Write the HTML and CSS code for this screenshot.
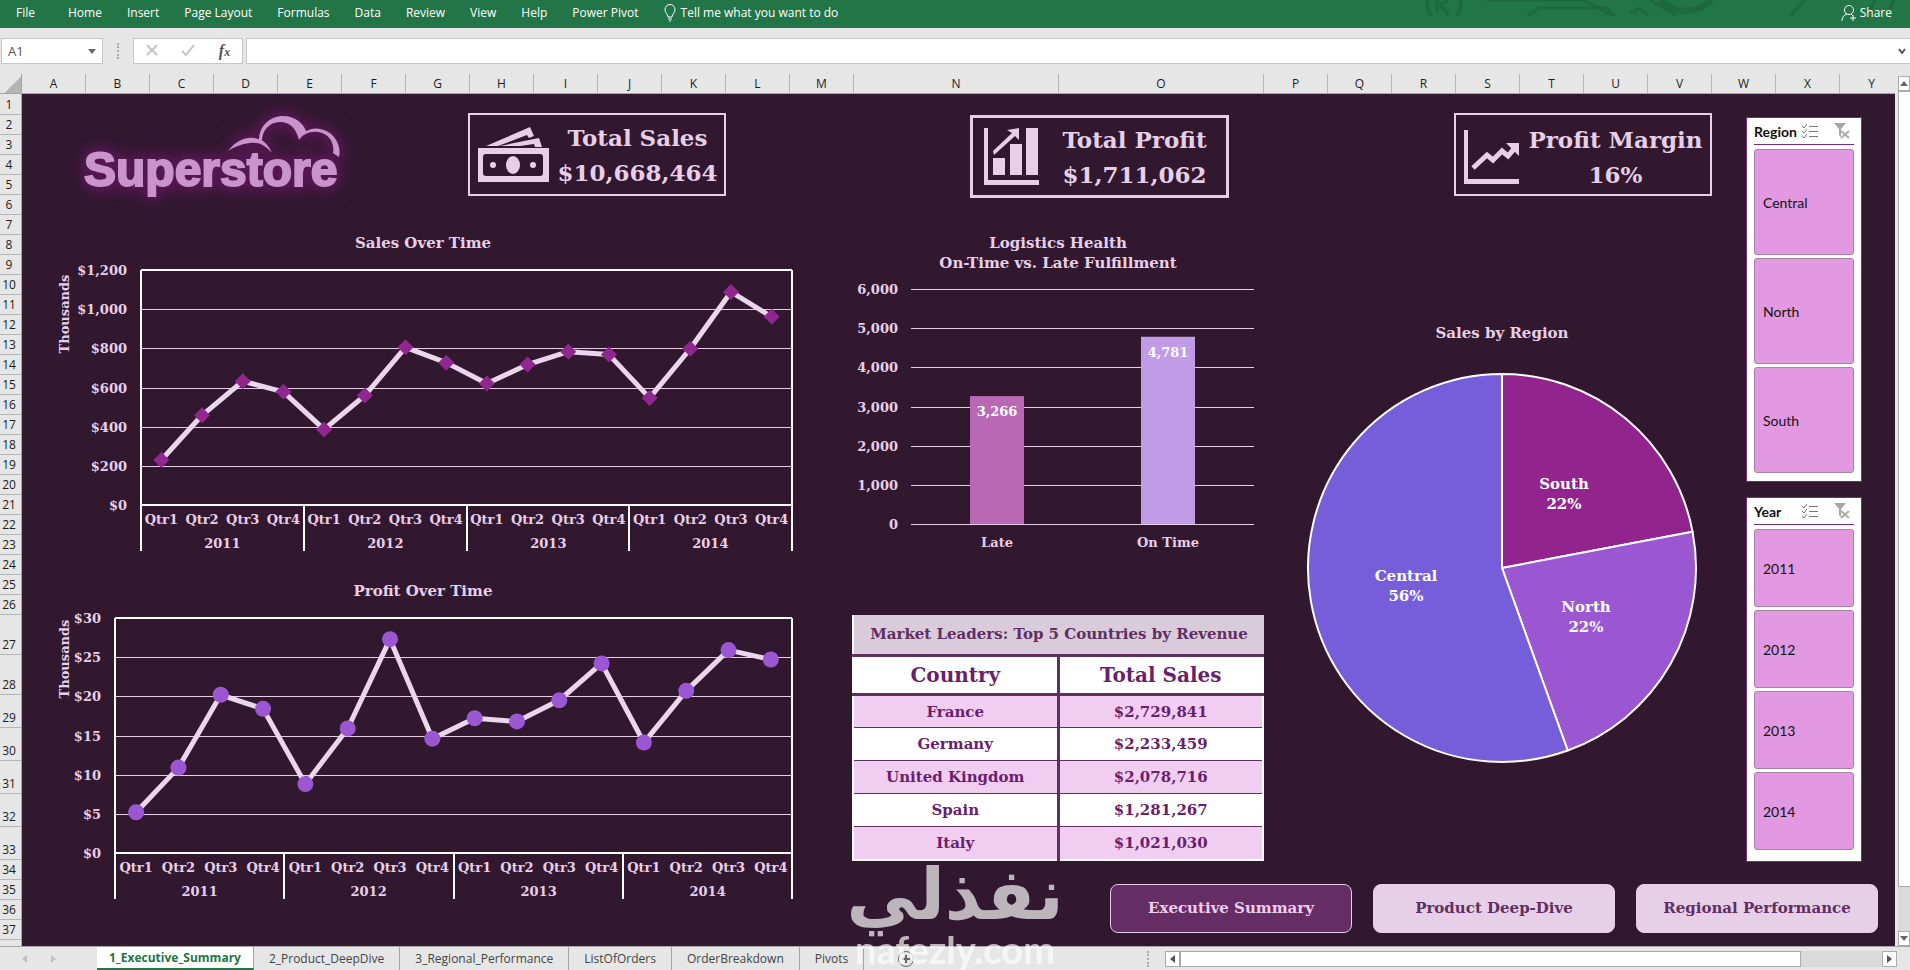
FILE: index.html
```html
<!DOCTYPE html>
<html lang="en">
<head>
    <meta charset="UTF-8">
    <meta name="viewport" content="width=device-width, initial-scale=1.0">
    <title>Superstore - Executive Summary</title>
    <link rel="stylesheet" href="styles.css">
</head>
<body>
    <header class="ribbon">
        <svg class="ribbon-art" width="500" height="16" viewBox="0 0 500 16" fill="none" stroke="#1d683c" stroke-width="3">
            <path d="M18 0q-3 8 3 16M50 0q3 8-3 16M27 0v12M38 0l-8 5 9 10"/>
            <path d="M77 0h96l30 16M117 16l13-8h67l8 8M220 13l10-5 9 8M240 0l27 16"/>
            <path d="M250 0q26 22 52 0" stroke-width="6"/>
            <path d="M395 0l-15 16M465 0l-5 10M484 0l-6 12"/>
        </svg>
        <nav class="menu">
            <button class="menu-file">File</button>
            <button>Home</button>
            <button>Insert</button>
            <button>Page Layout</button>
            <button>Formulas</button>
            <button>Data</button>
            <button>Review</button>
            <button>View</button>
            <button>Help</button>
            <button>Power Pivot</button>
            <button class="tell-me">
                <svg width="12" height="18" viewBox="0 0 12 18" fill="none" stroke="#fff"><path d="M4 13c0-3-3-4-3-7.500a5 5 0 0 1 10 0C11 9 8 10 8 13zM4 15h4M5 17h2"/></svg>
                Tell me what you want to do
            </button>
        </nav>
        <button class="share">
            <svg width="16" height="18" viewBox="0 0 16 18" fill="none" stroke="#fff"><circle cx="8" cy="6" r="4.500"/><path d="M1 17c0-4 2-6 5-7M10 10l2 2M12 11v6M9 14h6"/></svg>
            Share
        </button>
    </header>

    <div class="formula-bar">
        <div class="name-box">
            <input type="text" value="A1" aria-label="Name box">
            <span class="arrow-down"></span>
        </div>
        <span class="grip"></span>
        <div class="fx-box">
            <button aria-label="Cancel"><svg width="12" height="12" viewBox="0 0 12 12" stroke="#c3c3c3" stroke-width="2"><path d="M1 1l10 10M11 1L1 11"/></svg></button>
            <button aria-label="Enter"><svg width="14" height="12" viewBox="0 0 14 12" fill="none" stroke="#c3c3c3" stroke-width="2"><path d="M1 7l4 4 8-10"/></svg></button>
            <button class="fx" aria-label="Insert function">f<sub>x</sub></button>
        </div>
        <input class="formula" type="text" aria-label="Formula">
        <svg class="expand" width="8" height="6" viewBox="0 0 8 6" fill="none" stroke="#555" stroke-width="2"><path d="M1 1l3 4 3-4"/></svg>
    </div>

    <div class="grid-area">
        <div class="corner"></div>
        <div class="col-heads"><div class="col-row" id="colHeads"></div></div>
        <div class="row-heads" id="rowHeads"></div>

        <main class="dashboard">
            <section class="left">
                <div class="top-row">
                    <svg class="logo" width="320" height="130" viewBox="0 4 320 130" role="img" aria-label="Superstore">
                        <text x="24" y="96">Superstore</text>
                        <path d="M168 61C176 51 185 47 194 48C204 49 209 56 212 63C205 55 199 52 190 53C181 54 174 57 168 61Z"/>
                        <path d="M199 50C199 36 210 26 223 26C235 26 243 33 246 41C252 38 257 38 260 39C273 41 282 54 279 67L273 63C275 54 269 43 258 42C250 41 243 44 239 50C236 38 230 32 220 32C209 32 202 41 202 51Z"/>
                    </svg>
                    <div class="kpi">
                        <svg width="71" height="56" viewBox="0 0 71 56">
                            <path d="M8 19L52 0l4 9-5 2-2-3L20 19zM22 19l39-8 3 9h-7l-1-3-14 2z"/>
                            <path fill-rule="evenodd" d="M0 21h71v34H0zM8 27q-3 0-3 3v16q0 3 3 3h54q3 0 3-3V30q0-3-3-3z"/>
                            <ellipse cx="35" cy="38" rx="7" ry="9"/><circle cx="15" cy="38" r="3"/><circle cx="55" cy="38" r="3"/>
                        </svg>
                        <div class="kpi-text"><h2>Total Sales</h2><p>$10,668,464</p></div>
                    </div>
                </div>
                <svg class="chart" id="salesChart" viewBox="0 0 798 351"></svg>
                <svg class="chart" id="profitChart" viewBox="0 0 798 332"></svg>
            </section>

            <div class="right">
                <div class="panels">
                    <section class="center">
                        <div class="top-row">
                            <div class="kpi kpi-thick">
                                <svg width="55" height="57" viewBox="0 0 55 57">
                                    <path d="M0 0h4v52h51v5H0zM9 30h12v17H9zM26 16h12v31H26zM42 0h12v47H42z"/>
                                    <path d="M9 23L28 5l-5-3 12-2v12l-4-4L10 27z"/>
                                </svg>
                                <div class="kpi-text"><h2>Total Profit</h2><p>$1,711,062</p></div>
                            </div>
                        </div>
                        <svg class="chart" id="barChart" viewBox="0 0 470 374"></svg>
                        <table class="leaders">
                            <caption>Market Leaders: Top 5 Countries by Revenue</caption>
                            <thead>
                                <tr><th scope="col">Country</th><th scope="col">Total Sales</th></tr>
                            </thead>
                            <tbody>
                                <tr><td>France</td><td>$2,729,841</td></tr>
                                <tr><td>Germany</td><td>$2,233,459</td></tr>
                                <tr><td>United Kingdom</td><td>$2,078,716</td></tr>
                                <tr><td>Spain</td><td>$1,281,267</td></tr>
                                <tr><td>Italy</td><td>$1,021,030</td></tr>
                            </tbody>
                        </table>
                    </section>

                    <section class="regions">
                        <div class="top-row">
                            <div class="kpi kpi-margin">
                                <svg width="55" height="54" viewBox="0 0 55 54">
                                    <path d="M0 0h4v49h51v5H0z"/>
                                    <path d="M9 38l14-13 6 5 9-9 6 5 6-7" fill="none" stroke="#e8cfe8" stroke-width="5"/>
                                    <path d="M42 13h13v13z"/>
                                </svg>
                                <div class="kpi-text"><h2>Profit Margin</h2><p>16%</p></div>
                            </div>
                        </div>
                        <svg class="chart" id="pieChart" viewBox="0 0 440 560"></svg>
                    </section>

                    <aside class="slicers">
                        <div class="slicer slicer-region">
                            <div class="slicer-head">
                                <h3>Region</h3>
                                <button aria-label="Multi-select"><svg width="16" height="15" viewBox="0 0 16 15" fill="none" stroke="#777"><path d="M7 2.500h9M7 7.500h9M7 12.500h9M0 2l2 2 3-4M0 7l2 2 3-4M0 12l2 2 3-4"/></svg></button>
                                <button aria-label="Clear filter"><svg width="16" height="16" viewBox="0 0 16 16"><path fill="#a6a6a6" d="M0 0h12L7 6v8l-2-2V6z"/><path stroke="#b0aca6" stroke-width="2" d="M7 8l8 7M15 8l-8 7"/></svg></button>
                            </div>
                            <button class="item">Central</button>
                            <button class="item">North</button>
                            <button class="item">South</button>
                        </div>
                        <div class="slicer slicer-year">
                            <div class="slicer-head">
                                <h3>Year</h3>
                                <button aria-label="Multi-select"><svg width="16" height="15" viewBox="0 0 16 15" fill="none" stroke="#777"><path d="M7 2.500h9M7 7.500h9M7 12.500h9M0 2l2 2 3-4M0 7l2 2 3-4M0 12l2 2 3-4"/></svg></button>
                                <button aria-label="Clear filter"><svg width="16" height="16" viewBox="0 0 16 16"><path fill="#a6a6a6" d="M0 0h12L7 6v8l-2-2V6z"/><path stroke="#b0aca6" stroke-width="2" d="M7 8l8 7M15 8l-8 7"/></svg></button>
                            </div>
                            <button class="item">2011</button>
                            <button class="item">2012</button>
                            <button class="item">2013</button>
                            <button class="item">2014</button>
                        </div>
                    </aside>
                </div>

                <nav class="pages">
                    <a class="page current" href="#summary">Executive Summary</a>
                    <a class="page" href="#products">Product Deep-Dive</a>
                    <a class="page" href="#regional">Regional Performance</a>
                </nav>
            </div>
        </main>

        <div class="vscroll">
            <button aria-label="Scroll up"><span class="arrow-up"></span></button>
            <div class="thumb"></div>
            <button aria-label="Scroll down"><span class="arrow-down"></span></button>
        </div>
    </div>

    <footer class="tabs">
        <span class="arrow-left faint"></span>
        <span class="arrow-right faint"></span>
        <div class="tab-list">
            <button class="tab active">1_Executive_Summary</button>
            <button class="tab">2_Product_DeepDive</button>
            <button class="tab">3_Regional_Performance</button>
            <button class="tab">ListOfOrders</button>
            <button class="tab">OrderBreakdown</button>
            <button class="tab">Pivots</button>
        </div>
        <button class="add" aria-label="New sheet"><svg width="16" height="16" viewBox="0 0 16 16" fill="none" stroke="#666"><circle cx="8" cy="8" r="7.500"/><path stroke-width="2" d="M8 4v8M4 8h8"/></svg></button>
        <span class="grip"></span>
        <div class="hscroll">
            <button aria-label="Scroll left"><span class="arrow-left"></span></button>
            <div class="thumb"></div>
            <div class="track"></div>
            <button aria-label="Scroll right"><span class="arrow-right"></span></button>
        </div>
    </footer>

    <div class="watermark">
        <span class="wm-arabic" lang="ar" dir="rtl">نفذلي</span>
        <span class="wm-latin">nafezly.com</span>
    </div>

    <script>
        // column and row headings
        document.getElementById('colHeads').innerHTML =
            'ABCDEFGHIJKLMNOPQRSTUVWXY'.split('').map(c => `<div>${c}</div>`).join('');

        let rows = '';
        for (let i = 1; i <= 38; i++) {
            let size = '';
            if (i === 27 || i === 28) size = 'tall';
            else if (i > 28 && i < 34) size = 'mid';
            rows += `<div class="${size}">${i < 38 ? i : ''}</div>`;
        }
        document.getElementById('rowHeads').innerHTML = rows;

        function line(x1, y1, x2, y2, cls) {
            return `<line x1="${x1}" y1="${y1}" x2="${x2}" y2="${y2}" class="${cls}"/>`;
        }

        function text(x, y, str, cls) {
            return `<text x="${x}" y="${y}" class="${cls}">${str}</text>`;
        }

        // quarterly line chart with the years under the quarters
        function lineChart(id, o) {
            const right = 770;
            const height = 235;
            const bottom = o.top + height;
            const step = (right - o.left) / 16;
            let out = text(401, o.titleY, o.title, 'title');
            out += `<text transform="translate(47 ${o.unitY}) rotate(-90)" class="label">Thousands</text>`;

            for (let v = 0; v <= o.max; v += o.tick) {
                const y = Math.round(bottom - v / o.max * height);
                if (v > 0 && v < o.max) out += line(o.left, y, right, y, 'gridline');
                out += text(o.left - 14, y + 5, '$' + v.toLocaleString('en-US'), 'label end');
            }
            out += line(o.left, o.top, right, o.top, 'frame');
            out += line(o.left, bottom, right, bottom, 'frame');

            for (let i = 0; i <= 4; i++) {
                const x = Math.round(o.left + i * step * 4);
                const from = i === 0 || i === 4 ? o.top : bottom;
                out += line(x, from, x, bottom + 46, 'frame');
                if (i < 4) out += text(x + step * 2, bottom + 43, 2011 + i, 'label');
            }

            const pts = o.values.map((v, i) => [o.left + step * (i + 0.5), bottom - v / o.max * height]);
            out += `<polyline points="${pts.join(' ')}" class="series"/>`;
            pts.forEach(([x, y], i) => {
                out += text(x, bottom + 19, 'Qtr' + (i % 4 + 1), 'label');
                out += o.round
                    ? `<circle cx="${x}" cy="${y}" r="8" class="dot"/>`
                    : `<path d="M${x} ${y - 8}l8 8-8 8-8-8z" class="diamond"/>`;
            });
            document.getElementById(id).innerHTML = out;
        }

        lineChart('salesChart', {
            title: 'Sales Over Time', titleY: 22, unitY: 88, left: 119, top: 44, max: 1200, tick: 200,
            values: [230, 458, 632, 578, 386, 559, 805, 727, 620, 717, 783, 768, 547, 798, 1088, 961]
        });
        lineChart('profitChart', {
            title: 'Profit Over Time', titleY: 19, unitY: 82, left: 93, top: 41, max: 30, tick: 5, round: true,
            values: [5.2, 10.9, 20.2, 18.4, 8.8, 15.9, 27.3, 14.6, 17.2, 16.8, 19.5, 24.2, 14.1, 20.7, 25.9, 24.7]
        });

        // logistics bars
        let bars = text(238, 22, 'Logistics Health', 'title') + text(238, 42, 'On-Time vs. Late Fulfillment', 'title');
        for (let v = 0; v <= 6000; v += 1000) {
            const y = Math.round(298 - v / 6000 * 235);
            bars += line(91, y, 434, y, 'gridline') + text(78, y + 5, v.toLocaleString('en-US'), 'label end');
        }
        [['Late', 3266, 177, 'late'], ['On Time', 4781, 348, 'ontime']].forEach(([name, v, x, cls]) => {
            const h = v / 6000 * 235;
            bars += `<rect x="${x - 27}" y="${298 - h}" width="54" height="${h}" class="${cls}"/>`;
            bars += text(x, 298 - h + 20, v.toLocaleString('en-US'), 'label white');
            bars += text(x, 321, name, 'label');
        });
        document.getElementById('barChart').innerHTML = bars;

        // sales by region, clockwise from the top
        let pie = text(212, 112, 'Sales by Region', 'title');
        let start = 0;
        [['South', 22, 22, 274, 263], ['North', 22, 22.5, 296, 386], ['Central', 56, 55.5, 116, 355]].forEach(([name, pct, share, x, y]) => {
            const end = start + share / 100 * 2 * Math.PI;
            const p = a => (212 + 194 * Math.sin(a)) + ' ' + (342 - 194 * Math.cos(a));
            pie += `<path d="M212 342L${p(start)}A194 194 0 ${share > 50 ? 1 : 0} 1 ${p(end)}Z" class="slice ${name.toLowerCase()}"/>`;
            pie += text(x, y, name, 'title white') + text(x, y + 20, pct + '%', 'title white');
            start = end;
        });
        document.getElementById('pieChart').innerHTML = pie;
    </script>
</body>
</html>
```
FILE: styles.css
```css
* {
    box-sizing: border-box;
}
body {
    margin: 0;
    height: 100vh;
    display: flex;
    flex-direction: column;
    position: relative;
    overflow: hidden;
    background: #e6e6e6;
    font-family: "Open Sans", "Noto Sans", sans-serif;
    font-size: 12px;
    color: #1c1c1c;
}
button, input {
    font: inherit;
    color: inherit;
    border: none;
    background: none;
    padding: 0;
    margin: 0;
}
h2, h3, p {
    margin: 0;
}

/* ribbon */
.ribbon {
    height: 28px;
    flex: none;
    display: flex;
    justify-content: space-between;
    align-items: flex-start;
    padding: 0 18px 0 16px;
    background: #217546;
    color: #fff;
    position: relative;
}
.ribbon-art {
    position: absolute;
    right: 0;
    top: 0;
}
.menu {
    display: flex;
    gap: 25px;
    height: 25px;
}
.menu-file {
    margin-right: 8px;
}
.tell-me, .share {
    display: flex;
    align-items: center;
    gap: 5px;
}
.share {
    height: 25px;
    gap: 3px;
    position: relative;
}

/* formula bar */
.formula-bar {
    height: 46px;
    flex: none;
    display: flex;
    align-items: center;
    padding: 8px 0 8px 1px;
    position: relative;
}
.name-box, .fx-box, .formula {
    height: 26px;
    background: #fff;
    border: 1px solid #c6c6c6;
}
.name-box {
    width: 102px;
    display: flex;
    align-items: center;
    padding: 0 6px;
    color: #555;
    font-size: 13px;
}
.name-box input {
    flex: 1;
    min-width: 0;
}
.grip {
    width: 2px;
    height: 16px;
    margin: 0 14px;
    border-left: 2px dotted #aaa;
}
.fx-box {
    width: 110px;
    display: flex;
    align-items: center;
    justify-content: space-around;
}
.fx {
    font: italic bold 16px/20px "Liberation Serif", serif;
    color: #555;
}
.fx sub {
    font-size: 12px;
    vertical-align: baseline;
}
.formula {
    flex: 1;
    margin-left: 3px;
    border-right: none;
}
.expand {
    position: absolute;
    right: 4px;
}
.arrow-down, .arrow-up, .arrow-left, .arrow-right {
    display: block;
    width: 0;
    height: 0;
    border: 4px solid transparent;
}
.arrow-down {
    border-top: 5px solid #666;
    border-bottom: none;
}
.arrow-up {
    border-bottom: 5px solid #666;
    border-top: none;
}
.arrow-left {
    border-right: 5px solid #555;
    border-left: none;
}
.arrow-right {
    border-left: 5px solid #555;
    border-right: none;
}
.faint {
    opacity: 0.25;
}

/* sheet */
.grid-area {
    flex: 1;
    min-height: 0;
    display: grid;
    grid-template-columns: 22px minmax(0, 1fr) 15px;
    grid-template-rows: 20px minmax(0, 1fr);
}
.corner {
    border-right: 1px solid #a5a5a5;
    border-bottom: 1px solid #a5a5a5;
    background: linear-gradient(135deg, transparent 60%, #b5b5b5 60%);
}
.col-heads {
    overflow: hidden;
    border-bottom: 1px solid #a5a5a5;
}
/* the last column runs on under the scrollbar */
.col-row {
    width: calc(100% + 9px);
    display: grid;
    grid-template-columns: repeat(13, 64fr) 205fr 205fr repeat(10, 64fr);
}
.col-row div {
    border-right: 1px solid #b5b5b5;
    text-align: center;
    line-height: 19px;
}
.row-heads {
    grid-column: 1;
    overflow: hidden;
    border-right: 1px solid #a5a5a5;
}
.row-heads div {
    height: 20px;
    display: flex;
    align-items: flex-end;
    justify-content: center;
    padding-right: 3px;
    line-height: 18px;
    border-bottom: 1px solid #b5b5b5;
}
.row-heads div:first-child {
    height: 21px;
}
.row-heads .tall {
    height: 40px;
}
.row-heads .mid {
    height: 33px;
}
.dashboard {
    background: #31182f;
    display: flex;
    overflow: hidden;
    font-family: "DejaVu Serif", serif;
    font-weight: bold;
    color: #e8cfe8;
}
.left {
    flex: 798;
    min-width: 0;
}
.right {
    flex: 1075;
    min-width: 0;
}
.panels {
    display: grid;
    grid-template-columns: minmax(0, 470fr) minmax(0, 440fr) 165px;
}
.top-row {
    height: 132px;
    display: flex;
    align-items: flex-start;
    justify-content: space-between;
    padding-top: 19px;
}
.left .top-row {
    padding: 0 94px 0 38px;
}
.left .kpi {
    margin-top: 19px;
}
.center .top-row {
    justify-content: flex-end;
    padding: 21px 61px 0 0;
}
.regions .top-row {
    justify-content: flex-end;
    padding-right: 18px;
}
.logo {
    filter: drop-shadow(0 0 3px #561852) drop-shadow(0 0 6px #561852) drop-shadow(0 0 8px #561852);
    fill: #c994cb;
}
.logo text {
    font: bold 48px "Liberation Sans", sans-serif;
    stroke: #c994cb;
    stroke-width: 2px;
}
.kpi {
    width: 258px;
    height: 83px;
    border: 2px solid #e8cfe8;
    display: flex;
    align-items: center;
    gap: 4px;
    padding: 0 2px 0 8px;
}
.kpi svg {
    flex: none;
    fill: #e8cfe8;
}
.kpi-thick {
    width: 259px;
    border-width: 3px;
    padding: 0 0 0 11px;
}
.kpi-margin {
    padding: 4px 2px 0 8px;
}
.kpi-text {
    flex: 1;
    text-align: center;
    white-space: nowrap;
    font-size: 23px;
    line-height: 35px;
}
.kpi-text h2 {
    font-size: 23px;
}

/* charts */
.chart {
    display: block;
    width: 100%;
    height: auto;
}
.chart text {
    fill: #e8cfe8;
    text-anchor: middle;
}
.title {
    font-size: 15px;
}
.label {
    font-size: 13px;
}
.chart .end {
    text-anchor: end;
}
.chart .white {
    fill: #fff;
}
.gridline {
    stroke: #e8cfe8;
    stroke-width: 1px;
    shape-rendering: crispEdges;
}
.frame {
    stroke: #fff;
    stroke-width: 2px;
}
.series {
    fill: none;
    stroke: #ecd6ec;
    stroke-width: 5px;
    stroke-linejoin: round;
}
.diamond {
    fill: #90268f;
}
.dot {
    fill: #9a57d1;
}
.late {
    fill: #b968b6;
}
.ontime {
    fill: #c29be6;
}
.slice {
    stroke: #fff;
    stroke-width: 2px;
    stroke-linejoin: round;
}
.slice.south {
    fill: #91258d;
}
.slice.north {
    fill: #9a57d1;
}
.slice.central {
    fill: #765dda;
}

/* top countries */
.leaders {
    width: 412px;
    max-width: 100%;
    margin: 15px 0 0 32px;
    border-collapse: collapse;
    table-layout: fixed;
    border: 2px solid #fff;
    border-top: none;
    background: #fff;
    color: #6a1f6c;
    font-size: 15px;
    text-align: center;
}
.leaders caption {
    height: 39px;
    line-height: 39px;
    background: #d9cbd9;
    border-left: 2px solid #fff;
    color: #5f2f62;
    white-space: nowrap;
}
.leaders th {
    height: 39px;
    padding: 0;
    font-size: 20px;
    border-top: 3px solid #5f2f62;
    border-bottom: 3px solid #5f2f62;
}
.leaders th + th, .leaders td + td {
    border-left: 3px solid #5f2f62;
}
.leaders td {
    height: 33px;
    padding: 0;
    border-top: 1px solid #5f2f62;
}
.leaders tbody tr:nth-child(odd) {
    background: #f2cdf2;
}

/* slicers */
.slicers {
    padding: 23px 33px 0 16px;
    display: flex;
    flex-direction: column;
    gap: 15px;
    font-family: Lato, sans-serif;
    font-weight: normal;
    color: #111;
}
.slicer {
    background: #fff;
    border: 1px solid #7d2b7c;
    padding: 0 7px 8px 7px;
    display: flex;
    flex-direction: column;
    gap: 3px;
}
.slicer-year {
    padding-bottom: 11px;
}
.slicer-head {
    height: 27px;
    margin-bottom: 1px;
    display: grid;
    grid-template-columns: 48px 1fr 20px;
    align-items: center;
    border-bottom: 1px solid #7d2b7c;
}
.slicer-head h3 {
    font-size: 14px;
}
.slicer-head button {
    display: flex;
}
.item {
    height: 106px;
    text-align: left;
    padding-left: 8px;
    font-size: 14px;
    background: #e299e1;
    border: 1px solid #a583a6;
    border-radius: 3px;
}
.slicer-year .item {
    height: 78px;
}

/* page buttons */
.pages {
    display: flex;
    justify-content: flex-end;
    gap: 21px;
    padding: 22px 17px 0 0;
}
.page {
    width: 242px;
    height: 49px;
    line-height: 47px;
    text-align: center;
    font-size: 15px;
    border: 1px solid #e8cfe8;
    border-radius: 8px;
    background: #e8cfe8;
    color: #5f2f62;
    text-decoration: none;
    white-space: nowrap;
}
.page.current {
    background: #642d63;
    color: #f0cdf0;
}

/* scrollbars */
.vscroll {
    grid-column: 3;
    grid-row: 1 / 3;
    display: flex;
    flex-direction: column;
    margin: 2px 0 0 3px;
    background: #dadada;
}
.vscroll button, .hscroll button {
    display: flex;
    align-items: center;
    justify-content: center;
    background: #fff;
    border: 1px solid #ababab;
}
.vscroll button {
    height: 15px;
}
.vscroll .thumb {
    flex: none;
    height: calc(95% - 31px);
    border: 1px solid #ababab;
    border-right: none;
    background: #fff;
}
.vscroll button:last-child {
    margin-top: auto;
}

/* sheet tabs */
.tabs {
    height: 24px;
    flex: none;
    display: flex;
    align-items: center;
    padding: 0 13px 0 22px;
    border-top: 1px solid #a5a5a5;
    color: #444;
}
.tabs .faint {
    margin-right: 24px;
}
.tab-list {
    display: flex;
    height: 100%;
    margin-left: 17px;
}
.tab {
    padding: 0 15px;
    border-right: 1px solid #a5a5a5;
}
.tab.active {
    padding: 0 12px;
    background: #fff;
    color: #217546;
    font-weight: bold;
    border-bottom: 2px solid #217546;
}
.add {
    display: flex;
    margin-left: 34px;
}
.tabs .grip {
    margin: 0 16px 0 auto;
}
.hscroll {
    width: 732px;
    height: 16px;
    display: flex;
    background: #dadada;
}
.hscroll button {
    width: 15px;
}
.hscroll .thumb {
    flex: 621;
    background: #fff;
    border: 1px solid #ababab;
}
.hscroll .track {
    flex: 81;
}

/* watermark over the sheet */
.watermark {
    position: absolute;
    left: 849px;
    bottom: 0;
    width: 212px;
    display: flex;
    flex-direction: column;
    align-items: center;
    color: #fff;
    opacity: 0.68;
    font-weight: bold;
    white-space: nowrap;
    pointer-events: none;
}
.wm-arabic {
    font: bold 71px/66px "DejaVu Sans", sans-serif;
}
.wm-latin {
    font: bold 38px/42px Lato, sans-serif;
}
```
